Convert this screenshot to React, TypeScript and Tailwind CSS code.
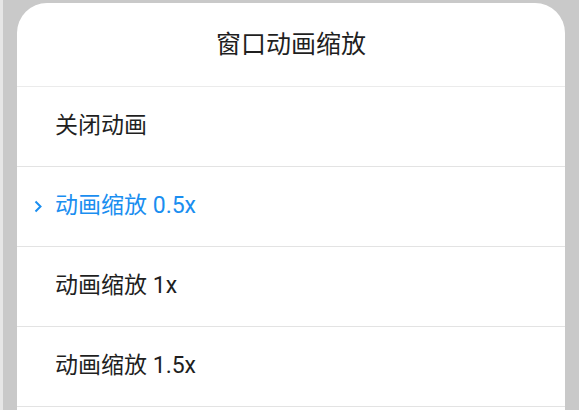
import React from "react";

const options = [
  { label: "关闭动画", active: false },
  { label: "动画缩放 0.5x", active: true },
  { label: "动画缩放 1x", active: false },
  { label: "动画缩放 1.5x", active: false },
];

const App = () => {
  return (
    <div
      className="w-[579px] h-[410px] overflow-hidden bg-[#c9c9c9] border-l-[3px] border-[#e6e6e6] pt-[3px] pl-[14px]"
      style={{ fontFamily: 'Roboto, "Noto Sans CJK SC", sans-serif' }}
    >
      <div className="w-[548px] h-[420px] bg-white rounded-t-[30px] flex flex-col">
        <div className="h-[84px] shrink-0 flex items-center justify-center border-b border-[#ebebeb] text-[25px] text-[#1f1f1f]">
          窗口动画缩放
        </div>
        {options.map((opt) => (
          <div
            key={opt.label}
            className="h-[80px] shrink-0 flex items-center border-b border-[#e3e3e3] relative pl-[38px]"
          >
            {opt.active && (
              <svg
                className="absolute left-[17px] top-[33px]"
                width="8"
                height="13"
                viewBox="0 0 8 13"
                fill="none"
              >
                <path d="M1.5 1.5 L6.5 6.5 L1.5 11.5" stroke="#1a8ef0" strokeWidth="2" />
              </svg>
            )}
            <span
              className={`text-[23px] ${opt.active ? "text-[#1a8ef0]" : "text-[#1f1f1f]"}`}
            >
              {opt.label}
            </span>
          </div>
        ))}
      </div>
    </div>
  );
};

export default App;
